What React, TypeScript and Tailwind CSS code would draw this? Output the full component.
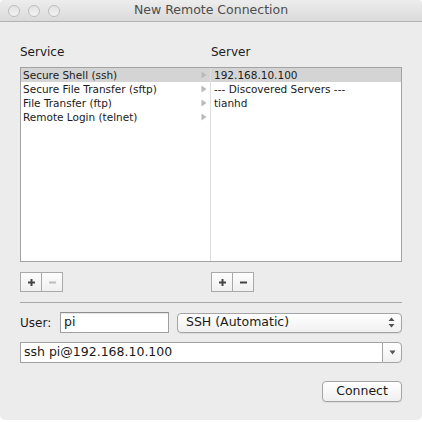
const services = [
  'Secure Shell (ssh)',
  'Secure File Transfer (sftp)',
  'File Transfer (ftp)',
  'Remote Login (telnet)',
];

const servers = ['192.168.10.100', '--- Discovered Servers ---', 'tianhd'];

function RowArrow() {
  return (
    <svg width="6" height="8" viewBox="0 0 6 8" aria-hidden="true">
      <polygon points="0.5,0.5 5.5,4 0.5,7.5" fill="#b9b9b9" />
    </svg>
  );
}

function Light() {
  return <div className="w-[12px] h-[12px] rounded-full border border-[#bdbdbd] bg-gradient-to-b from-[#e2e2e2] to-[#f3f3f3]" />;
}

function Plus({ color }: { color: string }) {
  return (
    <svg width="9" height="9" viewBox="0 0 9 9" aria-hidden="true">
      <path d="M4.5 1 V8 M1 4.5 H8" stroke={color} strokeWidth="2" />
    </svg>
  );
}

function Minus({ color }: { color: string }) {
  return (
    <svg width="9" height="9" viewBox="0 0 9 9" aria-hidden="true">
      <path d="M1 4.5 H8" stroke={color} strokeWidth="2" />
    </svg>
  );
}

function AddRemove({ minusEnabled }: { minusEnabled: boolean }) {
  return (
    <div className="flex h-[20px] w-[43px] border border-[#a9a9a9] bg-gradient-to-b from-[#fdfdfd] to-[#f0f0f0]">
      <div className="w-[21px] flex items-center justify-center border-r border-[#a9a9a9]">
        <Plus color="#454545" />
      </div>
      <div className="flex-1 flex items-center justify-center">
        <Minus color={minusEnabled ? '#454545' : '#bdbdbd'} />
      </div>
    </div>
  );
}

export default function App() {
  return (
    <div className="w-[422px] h-[422px] bg-white font-['DejaVu_Sans',sans-serif] text-[#1a1a1a]">
      <div className="w-[422px] h-[420px] bg-[#ececec] rounded-t-[4px] rounded-b-[5px] overflow-hidden flex flex-col">
        {/* Title bar */}
        <div className="h-[22px] shrink-0 border-b border-[#b3b3b3] bg-gradient-to-b from-[#ededed] to-[#dadada] relative flex items-center">
          <div className="flex gap-[8px] pl-[8px]">
            <Light />
            <Light />
            <Light />
          </div>
          <div className="absolute inset-0 flex items-center justify-center text-[12.5px] text-[#4d4d4d]">
            New Remote Connection
          </div>
        </div>

        <div className="px-[20px] flex flex-col">
          {/* Column headers */}
          <div className="mt-[22px] h-[16px] flex items-center text-[12px]">
            <span className="w-[191px]">Service</span>
            <span>Server</span>
          </div>

          {/* Lists */}
          <div className="mt-[7px] h-[195px] border border-[#a3a3a3] bg-white flex text-[10.5px] leading-[14px]">
            <div className="w-[190px] border-r border-[#dedede]">
              {services.map((s, i) => (
                <div
                  key={s}
                  className={`h-[14px] flex items-center justify-between pl-[2px] pr-[3px] ${i === 0 ? 'bg-[#d4d4d4]' : ''}`}
                >
                  <span>{s}</span>
                  <RowArrow />
                </div>
              ))}
            </div>
            <div className="flex-1">
              {servers.map((s, i) => (
                <div key={s} className={`h-[14px] flex items-center pl-[3px] ${i === 0 ? 'bg-[#d4d4d4]' : ''}`}>
                  {s}
                </div>
              ))}
            </div>
          </div>

          {/* Add / remove */}
          <div className="mt-[10px] flex">
            <div className="w-[191px]">
              <AddRemove minusEnabled={false} />
            </div>
            <AddRemove minusEnabled={true} />
          </div>

          <div className="mt-[10px] h-px bg-[#a9a9a9]" />

          {/* User + protocol */}
          <div className="mt-[9px] h-[21px] flex items-center text-[12.5px]">
            <span className="w-[40px] text-[12px]">User:</span>
            <div className="w-[109px] h-[21px] border border-[#a0a0a0] border-t-[#8e8e8e] bg-white flex items-center pl-[3px] shadow-[inset_0_1px_0_#e6e6e6]">
              pi
            </div>
            <div className="ml-[8px] flex-1 h-[20px] rounded-[4px] border border-[#a4a4a4] bg-gradient-to-b from-white to-[#f0f0f0] flex items-center justify-between pl-[8px] pr-[6px] shadow-[0_1px_0_#dcdcdc]">
              <span>SSH (Automatic)</span>
              <svg width="7" height="11" viewBox="0 0 7 11" aria-hidden="true">
                <polygon points="3.5,0.5 6.5,4 0.5,4" fill="#505050" />
                <polygon points="0.5,7 6.5,7 3.5,10.5" fill="#505050" />
              </svg>
            </div>
          </div>

          {/* Command combo */}
          <div className="mt-[9px] h-[21px] flex text-[12.5px]">
            <div className="flex-1 bg-white border border-[#a0a0a0] border-r-0 flex items-center pl-[3px]">
              ssh pi@192.168.10.100
            </div>
            <div className="w-[20px] rounded-r-[4px] border border-[#a4a4a4] bg-gradient-to-b from-white to-[#f0f0f0] flex items-center justify-center">
              <svg width="7" height="5" viewBox="0 0 7 5" aria-hidden="true">
                <polygon points="0.5,0.5 6.5,0.5 3.5,4.5" fill="#555555" />
              </svg>
            </div>
          </div>

          {/* Connect */}
          <div className="mt-[18px] flex justify-end">
            <button className="w-[80px] h-[21px] rounded-[4px] border border-[#a4a4a4] bg-gradient-to-b from-white to-[#f0f0f0] text-[12.5px] flex items-center justify-center shadow-[0_1px_0_#dcdcdc]">
              Connect
            </button>
          </div>
        </div>
      </div>
    </div>
  );
}
